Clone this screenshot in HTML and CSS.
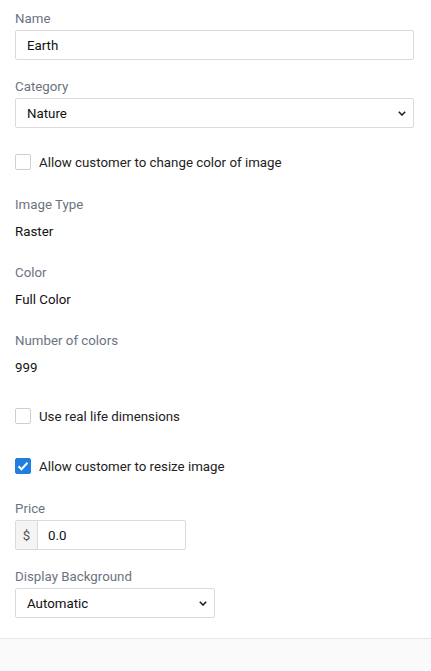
FILE: index.html
```html
<!DOCTYPE html>
<html>
<head>
<meta charset="utf-8">
<link rel="stylesheet" href="styles.css">
</head>
<body>
<div class="panel">
  <div class="field">
    <div class="label">Name</div>
    <div class="input full"><span class="val">Earth</span></div>
  </div>
  <div class="field">
    <div class="label">Category</div>
    <div class="input select full"><span class="val">Nature</span>
      <svg class="chev" width="8" height="5" viewBox="0 0 8 5"><path d="M0.8 0.8l3.2 3.2 3.2-3.2" fill="none" stroke="#222" stroke-width="1.6"/></svg>
    </div>
  </div>
  <div class="check first"><span class="box"></span><span>Allow customer to change color of image</span></div>
  <div class="info">
    <div class="label">Image Type</div>
    <div class="value">Raster</div>
  </div>
  <div class="info">
    <div class="label">Color</div>
    <div class="value">Full Color</div>
  </div>
  <div class="info">
    <div class="label">Number of colors</div>
    <div class="value">999</div>
  </div>
  <div class="check dims"><span class="box"></span><span>Use real life dimensions</span></div>
  <div class="check resize"><span class="box on"><svg width="12" height="10" viewBox="0 0 12 10"><path d="M1.5 5.2l3 3 6-6.4" fill="none" stroke="#fff" stroke-width="2"/></svg></span><span>Allow customer to resize image</span></div>
  <div class="field price">
    <div class="label">Price</div>
    <div class="input group"><span class="addon">$</span><span class="val">0.0</span></div>
  </div>
  <div class="field">
    <div class="label">Display Background</div>
    <div class="input select bg"><span class="val">Automatic</span>
      <svg class="chev" width="8" height="5" viewBox="0 0 8 5"><path d="M0.8 0.8l3.2 3.2 3.2-3.2" fill="none" stroke="#222" stroke-width="1.6"/></svg>
    </div>
  </div>
</div>
<div class="footer"></div>
</body>
</html>
```
FILE: styles.css
```css
html, body { margin: 0; padding: 0; background: #fff; }
body {
  font-family: Roboto, "Liberation Sans", Arial, sans-serif;
  font-size: 13.3px;
  color: #111;
}
.panel {
  padding: 9px 17px 20px 15px;
}
.label, .value {
  box-sizing: border-box;
  line-height: 18px;
  height: 18px;
  padding-top: 1px;
}
.label { color: #6c7380; }
.field { margin-bottom: 17px; }
.field .label { margin-bottom: 3px; }
.input {
  box-sizing: border-box;
  height: 30px;
  border: 1px solid #dadada;
  border-radius: 2px;
  display: flex;
  align-items: center;
  background: #fff;
}
.input .val { padding-left: 11px; }
.full { width: 100%; }
.select { justify-content: space-between; }
.chev { margin-right: 7px; }
.bg { width: 200px; }
.check {
  display: flex;
  align-items: center;
  gap: 8px;
  height: 18px;
  color: #222;
}
.box {
  box-sizing: border-box;
  width: 16px;
  height: 16px;
  border: 1px solid #cfcfcf;
  border-radius: 2px;
  display: flex;
  align-items: center;
  justify-content: center;
}
.box.on { background: #1f7ee0; border-color: #1f7ee0; }
.check.first { margin-top: 25px; margin-bottom: 24px; }
.info { margin-bottom: 23px; }
.info .value { margin-top: 9px; color: #111; }
.check.dims { margin-top: 31px; margin-bottom: 32px; }
.check.resize { margin-bottom: 24px; }
.group { width: 171px; }
.addon {
  width: 21px;
  height: 100%;
  background: #f4f4f4;
  border-right: 1px solid #dadada;
  color: #555;
  display: flex;
  align-items: center;
  justify-content: center;
}
.group .val { padding-left: 10px; }
.price { margin-bottom: 17px; }
.panel > .field:last-child { margin-bottom: 0; }
.footer {
  border-top: 1px solid #e6e6e6;
  background: #fafafa;
  height: 40px;
}
```
